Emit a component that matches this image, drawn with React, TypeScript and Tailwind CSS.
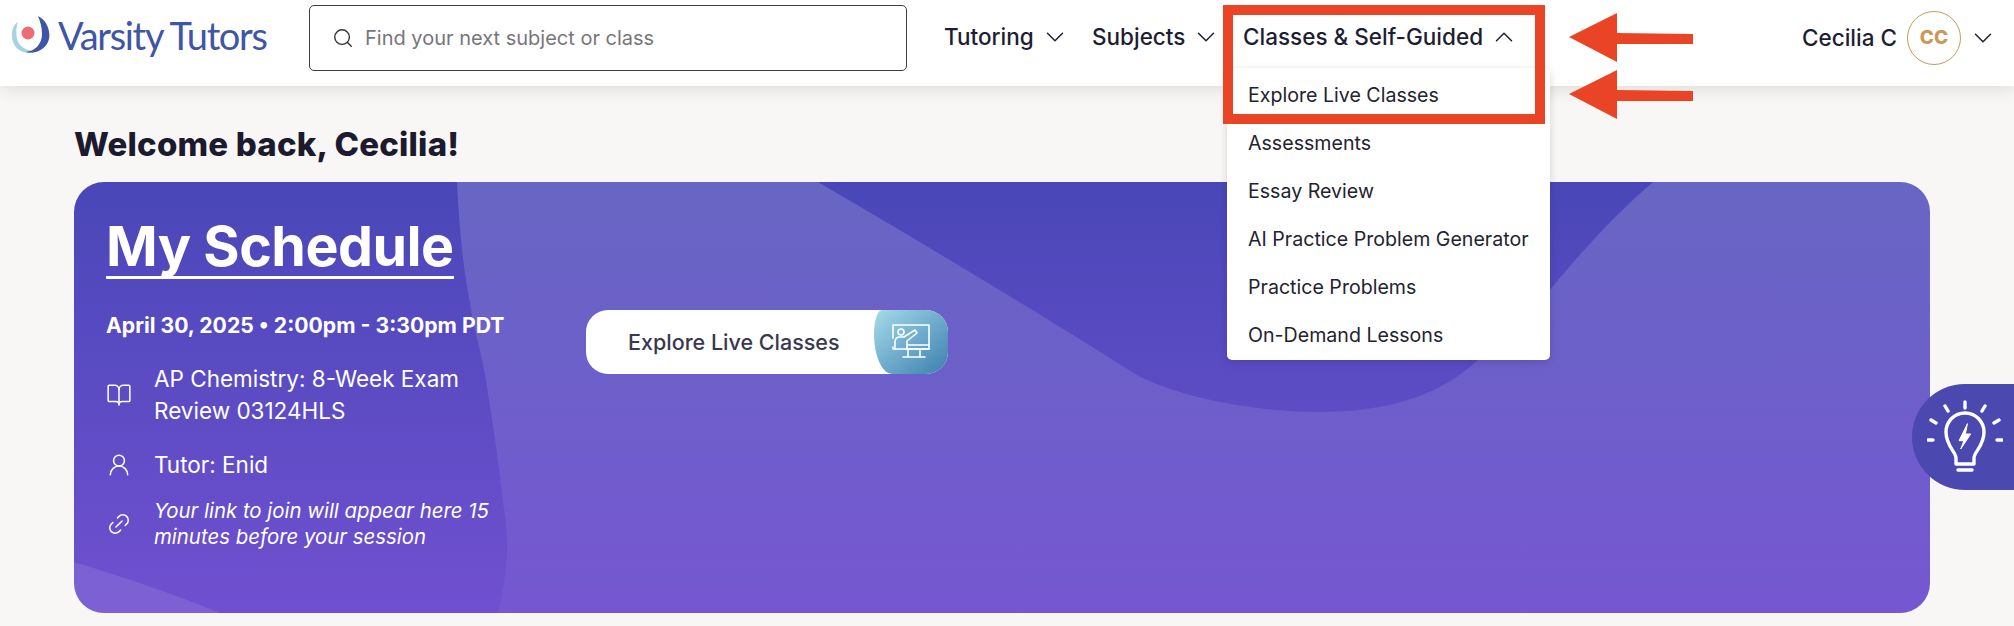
import { ChevronDown, ChevronUp, Search, BookOpen, UserRound, Link2 } from 'lucide-react'

const menuItems = ['Explore Live Classes', 'Assessments', 'Essay Review', 'AI Practice Problem Generator', 'Practice Problems', 'On-Demand Lessons']

function Logo() {
  return (
    <div className="flex items-center gap-[7px]">
      <svg width="40" height="38" viewBox="0 0 40 38">
        <path d="M7 6 C0 10 -1 22 4 30 C9 37 20 39 26 35 C17 36 8 31 6 23 C5 16 5 11 7 6Z" fill="#a5d3e3" />
        <path d="M27 0 C36 4 41 17 37 26 C33 35 22 38 15 36 C24 35 31 28 31 18 C31 11 29 5 27 0Z" fill="#3f55a5" />
        <circle cx="17" cy="17" r="6.5" fill="#ee6c74" />
      </svg>
      <span className="text-[38px] leading-none tracking-[-1.3px] text-[#3f55a5] font-['Lato',sans-serif] font-normal">Varsity Tutors</span>
    </div>
  )
}

function NavItem({ label, className }: { label: string; className: string }) {
  return (
    <div className={`flex items-center gap-[6px] ${className}`}>
      <span className="text-[22.5px] font-medium text-[#1e1e32]">{label}</span>
      <ChevronDown size={30} strokeWidth={1.2} className="text-[#1e1e32]" />
    </div>
  )
}

function Arrow() {
  return (
    <svg width="124" height="49" viewBox="0 0 124 49">
      <path d="M0 24 L48 0 L48 20 L124 21 L124 31 L48 31 L48 49Z" fill="#e94425" />
    </svg>
  )
}

function TeachIcon() {
  return (
    <svg width="40" height="40" viewBox="0 0 40 40" fill="none" stroke="white" strokeWidth="1.6" strokeLinecap="round" strokeLinejoin="round">
      <path d="M2 16 V3 H38 V27 H2 V25" />
      <circle cx="10" cy="10" r="3" />
      <path d="M4 27 V20 C4 16 6 15 9 15 H13 L24 8 L26 11 L16 19 V27" />
      <path d="M16 27 H38 M16 23 H38" />
      <path d="M17 27 V34 M29 27 V34 M12 35 H34" />
    </svg>
  )
}

function BulbIcon() {
  return (
    <svg width="76" height="76" viewBox="0 0 76 76" fill="none" stroke="white" strokeWidth="3.4" strokeLinecap="round" strokeLinejoin="round">
      <path d="M38 3 V9 M18 7 L21 12 M58 7 L55 12 M4 21 L9 24 M72 21 L67 24 M1 41 H6 M70 41 H75" />
      <path d="M29 65 V59 C29 53 19 47 19 33 A19 19 0 0 1 57 33 C57 47 47 53 47 59 V65 Z" />
      <path d="M31 71 H45" />
      <path d="M40.3 25 L32 41.7 H37 L33.7 50 L43.7 35 H38.7 Z" fill="white" strokeWidth="1" />
    </svg>
  )
}

export default function App() {
  return (
    <div className="relative h-[626px] w-[2014px] overflow-hidden bg-[#f8f7f6] font-['Inter',sans-serif]">
      <header className="flex h-[86px] items-start bg-white shadow-[0_4px_16px_rgba(0,0,0,0.1)]">
        <div className="ml-[11px] mt-[16px] w-[298px]">
          <Logo />
        </div>
        <div className="mt-[5px] flex h-[66px] w-[598px] items-center gap-[11px] rounded-[5px] border border-[#3c3c4a] px-[22px]">
          <Search size={22} strokeWidth={1.5} className="text-[#333]" />
          <span className="text-[20px] text-[#77757c]">Find your next subject or class</span>
        </div>
        <div className="ml-[37px] mt-[20px] flex">
          <NavItem label="Tutoring" className="w-[148px]" />
          <NavItem label="Subjects" className="w-[151px]" />
          <div className="flex items-center gap-[6px]">
            <span className="text-[22.5px] font-medium text-[#1e1e32]">Classes &amp; Self-Guided</span>
            <ChevronUp size={30} strokeWidth={1.2} className="text-[#1e1e32]" />
          </div>
        </div>
        <div className="ml-auto mt-[11px] flex items-center pr-[16px]">
          <span className="text-[22.5px] font-medium text-[#1e1e32]">Cecilia C</span>
          <div className="ml-[10px] flex h-[54px] w-[54px] items-center justify-center rounded-full border border-[#c9995a] text-[19px] font-extrabold text-[#c9995a]">CC</div>
          <ChevronDown size={30} strokeWidth={1.2} className="ml-[7px] text-[#1e1e32]" />
        </div>
      </header>

      <main className="px-[74px] pt-[38px]">
        <h1 className="h-[58px] text-[33px] font-extrabold leading-[40px] tracking-[0.2px] text-[#1b1a2e]">Welcome back, Cecilia!</h1>
        <section className="relative h-[431px] w-[1856px] overflow-hidden rounded-[30px] bg-gradient-to-b from-[#4947b8] to-[#7050d0]">
          <svg className="absolute inset-0" width="1856" height="431" viewBox="0 0 1856 431" fill="none">
            <defs>
              <linearGradient id="wave" gradientUnits="userSpaceOnUse" x1="0" y1="0" x2="0" y2="431">
                <stop offset="0" stopColor="#fff" stopOpacity="0.17" />
                <stop offset="1" stopColor="#fff" stopOpacity="0.04" />
              </linearGradient>
            </defs>
            <path d="M383 0 H744 C860 68 960 128 1066 195 C1120 220 1190 230 1246 230 C1310 230 1360 215 1396 185 C1425 160 1455 135 1476 108 C1515 60 1550 25 1579 0 H1856 V431 H424 C435 390 435 350 429 321 C425 280 420 250 413 205 C408 170 400 150 396 121 C388 80 385 40 383 0Z" fill="url(#wave)" />
            <path d="M0 380 C50 395 100 412 146 431 H0Z" fill="#fff" fillOpacity="0.1" />
          </svg>
          <div className="relative pl-[32px] pt-[34px] text-white">
            <h2 className="inline-block border-b-[3px] border-white text-[55.5px] font-bold leading-[60px] tracking-[-0.5px]">My Schedule</h2>
            <p className="mt-[32px] text-[21.2px] font-bold leading-[28px]">April 30, 2025 • 2:00pm - 3:30pm PDT</p>
            <div className="mt-[24px] flex w-[393px] items-center gap-[22px]">
              <BookOpen size={26} strokeWidth={1.4} className="shrink-0" />
              <span className="text-[22.5px] leading-[32px]">AP Chemistry: 8-Week Exam Review 03124HLS</span>
            </div>
            <div className="mt-[22px] flex items-center gap-[22px]">
              <UserRound size={26} strokeWidth={1.4} className="shrink-0" />
              <span className="text-[22.5px] leading-[32px]">Tutor: Enid</span>
            </div>
            <div className="mt-[17px] flex w-[393px] items-center gap-[22px]">
              <Link2 size={26} strokeWidth={1.4} className="shrink-0 -rotate-45" />
              <span className="text-[20.4px] italic leading-[26px]">Your link to join will appear here 15 minutes before your session</span>
            </div>
          </div>
          <div className="absolute left-[512px] top-[128px] flex h-[64px] w-[362px] items-center overflow-hidden rounded-[22px] bg-white pl-[42px]">
            <span className="text-[21.5px] font-medium text-[#3a3850]">Explore Live Classes</span>
            <div className="absolute right-0 top-0 flex h-full w-[74px] items-center justify-center rounded-tl-[8px_24px] rounded-bl-[18px_40px] bg-gradient-to-br from-[#a5dcea] to-[#3b7fae]">
              <TeachIcon />
            </div>
          </div>
        </section>
      </main>

      <div className="absolute left-[1227px] top-[68px] w-[323px] rounded-[5px] bg-white pt-[4px] shadow-[0_2px_8px_rgba(0,0,0,0.15)]">
        {menuItems.map((item) => (
          <div key={item} className="flex h-[48px] items-center pl-[21px] text-[19.6px] text-[#23232f]">{item}</div>
        ))}
      </div>

      <div className="absolute left-[1223px] top-[5px] h-[119px] w-[322px] border-[10px] border-[#e94425]" />
      <div className="absolute left-[1569px] top-[13px]"><Arrow /></div>
      <div className="absolute left-[1569px] top-[70px]"><Arrow /></div>

      <div className="absolute left-[1912px] top-[384px] flex h-[106px] w-[102px] items-center justify-center rounded-l-[53px] bg-[#4b48b0] pl-[4px]">
        <BulbIcon />
      </div>
    </div>
  )
}
